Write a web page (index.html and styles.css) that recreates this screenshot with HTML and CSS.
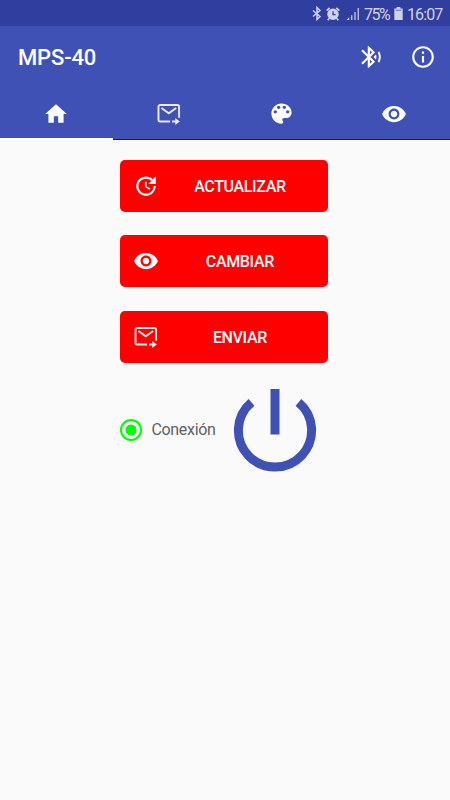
FILE: index.html
```html
<!DOCTYPE html>
<html lang="es">

<head>
  <meta charset="UTF-8">
  <meta name="viewport" content="width=device-width, initial-scale=1.0">
  <title>MPS-40</title>
  <link rel="stylesheet" href="styles.css">
</head>

<body>
  <!-- shared icons -->
  <svg class="defs">
    <symbol id="eye" viewBox="0 0 24 24">
      <path d="M12 4.500C7 4.500 2.730 7.610 1 12c1.730 4.390 6 7.500 11 7.500s9.270-3.110 11-7.500c-1.730-4.390-6-7.500-11-7.500zM12 17c-2.760 0-5-2.240-5-5s2.240-5 5-5 5 2.240 5 5-2.240 5-5 5zm0-8c-1.660 0-3 1.340-3 3s1.340 3 3 3 3-1.340 3-3-1.340-3-3-3z"/>
    </symbol>
    <symbol id="mail" viewBox="0 0 24 24">
      <path fill="none" stroke="currentColor" stroke-width="1.800" d="M13 19H3.800A1.500 1.500 0 0 1 2.300 17.500V5.200A1.500 1.500 0 0 1 3.800 3.700h16a1.500 1.500 0 0 1 1.500 1.500v10.200M5 6.500l6.800 4.900L18.600 6.500"/>
      <path d="M14.800 18.100h3v-2.300l4.200 3.200-4.200 3.200v-2.300h-3z"/>
    </symbol>
  </svg>

  <div class="statusbar">
    <svg class="st-bt" viewBox="0 0 10 14"><path d="M1 4l7 6-3 3V1l3 3-7 6" fill="none" stroke="currentColor" stroke-width="1.500"/></svg>
    <svg class="st-alarm" viewBox="0 0 14 14">
      <circle cx="7" cy="7.300" r="5.700"/>
      <path d="M.7 3.700L3.700 1M10.300 1l3 2.700M3 11.500l-1.200 1.800M11 11.500l1.200 1.800" stroke="currentColor" stroke-width="1.700"/>
      <path d="M7 4.200v3.400h2.600" fill="none" stroke="#303f9f" stroke-width="1.300"/>
    </svg>
    <svg class="st-signal" viewBox="0 0 14 14"><path d="M0 14l3-3v3zM5 9h1.300v5H5zM8.500 5.500h1.300V14H8.500zM12 1h1.300v13H12z"/></svg>
    <span class="percent">75%</span>
    <svg class="st-battery" viewBox="0 0 9 14"><path d="M2.500 0h4v1.500H9V14H0V1.500h2.500z"/><path fill="#303f9f" opacity=".7" d="M1.500 3h6v1h-6z"/></svg>
    <span class="time">16:07</span>
  </div>

  <header class="toolbar">
    <h1>MPS-40</h1>
    <svg class="icon bluetooth" viewBox="0 0 24 24"><path d="M14.240 12.010l2.320 2.320c.28-.72.44-1.510.44-2.330 0-.82-.16-1.590-.43-2.310l-2.330 2.320zm5.290-5.300l-1.260 1.260c.63 1.210.98 2.570.98 4.020s-.36 2.820-.98 4.020l1.200 1.200c.97-1.540 1.540-3.360 1.540-5.310-.01-1.890-.55-3.670-1.480-5.190zm-3.820 1L10 2H9v7.590L4.410 5 3 6.410 8.590 12 3 17.590 4.410 19 9 14.410V22h1l5.710-5.710-4.300-4.290 4.300-4.290zM11 5.830l1.880 1.880L11 9.590V5.830zm1.880 10.460L11 18.170v-3.760l1.880 1.880z"/></svg>
    <svg class="icon" viewBox="0 0 24 24"><path d="M11 17h2v-6h-2v6zm1-15C6.480 2 2 6.480 2 12s4.480 10 10 10 10-4.480 10-10S17.520 2 12 2zm0 18c-4.410 0-8-3.590-8-8s3.590-8 8-8 8 3.590 8 8-3.590 8-8 8zM11 9h2V7h-2v2z"/></svg>
  </header>

  <nav class="tabs">
    <a class="tab active"><svg class="icon" viewBox="0 0 24 24"><path d="M10 20v-6h4v6h5v-8h3L12 3 2 12h3v8z"/></svg></a>
    <a class="tab"><svg class="icon mail"><use href="#mail"/></svg></a>
    <a class="tab"><svg class="icon palette" viewBox="0 0 24 24"><path d="M12 3c-4.970 0-9 4.030-9 9s4.030 9 9 9c.83 0 1.500-.67 1.500-1.500 0-.39-.15-.74-.39-1.010-.23-.26-.38-.61-.38-.99 0-.83.67-1.500 1.500-1.500H16c2.760 0 5-2.240 5-5 0-4.420-4.030-8-9-8zm-5.500 9c-.83 0-1.500-.67-1.500-1.500S5.670 9 6.500 9 8 9.670 8 10.500 7.330 12 6.500 12zm3-4C8.670 8 8 7.330 8 6.500S8.670 5 9.500 5s1.500.67 1.500 1.500S10.330 8 9.500 8zm5 0c-.83 0-1.500-.67-1.500-1.500S13.670 5 14.500 5s1.500.67 1.500 1.500S15.330 8 14.500 8zm3 4c-.83 0-1.500-.67-1.500-1.500S16.670 9 17.500 9s1.500.67 1.500 1.500-.67 1.500-1.500 1.500z"/></svg></a>
    <a class="tab"><svg class="icon"><use href="#eye"/></svg></a>
  </nav>

  <main class="content">
    <button class="btn">
      <svg class="icon" viewBox="0 0 24 24"><path d="M21 10.120h-6.780l2.740-2.820c-2.730-2.700-7.150-2.800-9.880-.1-2.730 2.710-2.730 7.080 0 9.790s7.150 2.710 9.880 0C18.320 15.650 19 14.080 19 12.100h2c0 1.980-.88 4.550-2.640 6.290-3.510 3.480-9.210 3.480-12.720 0-3.500-3.470-3.530-9.110-.02-12.580s9.140-3.470 12.650 0L21 3v7.120zM12.500 8v4.250l3.500 2.080-.72 1.210L11 13V8h1.500z"/></svg>
      <span>ACTUALIZAR</span>
    </button>
    <button class="btn">
      <svg class="icon"><use href="#eye"/></svg>
      <span>CAMBIAR</span>
    </button>
    <button class="btn">
      <svg class="icon mail"><use href="#mail"/></svg>
      <span>ENVIAR</span>
    </button>

    <div class="connection">
      <label class="radio"><i class="dot"></i><span>Conexión</span></label>
      <svg class="power" viewBox="0 0 84 84">
        <path d="M18.500 14.400A36.600 36.600 0 1 0 65.500 14.400M42 1v45.500"/>
      </svg>
    </div>
  </main>
</body>

</html>
```
FILE: styles.css
```css
*{margin: 0; padding: 0; box-sizing: border-box;}
body{
  width: 450px;
  height: 800px;
  background-color: #fafafa;
  font-family: Roboto, "Liberation Sans", sans-serif;
  overflow: hidden;
}
svg{
  display: block;
  fill: currentColor;
  flex-shrink: 0;
}
.defs{display: none;}
.icon{
  width: 26px;
  height: 26px;
}

/* status bar */
.statusbar{
  display: flex;
  align-items: center;
  justify-content: flex-end;
  height: 26px;
  padding: 1px 8px 0 0;
  background-color: #303f9f;
  color: #cfd3ea;
}
.st-bt{width: 10px; height: 15px; margin-right: 4px;}
.st-alarm{width: 14px; height: 14px; margin-right: 6px;}
.st-signal{width: 14px; height: 13px; margin-right: 4px;}
.st-battery{width: 9px; height: 13px; margin: 0 4px;}
.percent{
  width: 26px;
  font-size: 16px;
  letter-spacing: -1.5px;
  white-space: nowrap;
}
.time{
  width: 35px;
  font-size: 16px;
  letter-spacing: -.9px;
  white-space: nowrap;
}
.percent,
.time{
  padding-top: 1px;
}

/* toolbar */
.toolbar{
  display: flex;
  align-items: center;
  height: 61px;
  padding: 0 14px 0 18px;
  background-color: #3f51b5;
  color: #fff;
}
.toolbar h1{
  flex: 1;
  font-size: 22px;
  font-weight: 500;
  letter-spacing: -.15px;
  padding-top: 2px;
}
.bluetooth{margin-right: 26px;}

/* tabs */
.tabs{
  display: grid;
  grid-template-columns: repeat(4, 1fr);
  height: 53px;
  background-color: #3f51b5;
  color: #fff;
}
.tab{
  display: flex;
  align-items: center;
  justify-content: center;
  padding-top: 1px;
  border-bottom: 1px solid #0a18a0;
}
.tab.active{
  padding-top: 2px;
  border-bottom: 2px solid #fff;
}
.tab .mail{color: #e8eaf6;}
.tab .palette{
  width: 27px;
  height: 27px;
}

/* content */
.content{
  display: flex;
  flex-direction: column;
  gap: 23.3px;
  width: 208px;
  margin: 20px 0 0 120.4px;
}
.btn{
  display: flex;
  align-items: center;
  height: 52px;
  padding: 0 13px;
  border: 0;
  border-radius: 5px;
  background-color: #f00;
  color: #fff;
  font-family: inherit;
  font-size: 16px;
  font-weight: 500;
  letter-spacing: -.35px;
}
.btn span{
  flex: 1;
  padding: 1px 0 0 5px;
  text-align: center;
}
.btn .mail{color: #ffe9e9;}
.connection{
  display: flex;
  align-items: center;
  gap: 19px;
  padding-top: 2px;
}
.radio{
  display: flex;
  align-items: center;
  gap: 9px;
  color: #616161;
}
.radio span{
  width: 63px;
  font-size: 16px;
  letter-spacing: -.3px;
}
.dot{
  width: 22px;
  height: 22px;
  border: 2px solid #0f0;
  border-radius: 50%;
  background: radial-gradient(circle, #0f0 5.2px, transparent 5.8px);
}
.power{
  width: 84px;
  height: 84px;
  fill: none;
  stroke: #3f51b5;
  stroke-width: 9px;
}
```
